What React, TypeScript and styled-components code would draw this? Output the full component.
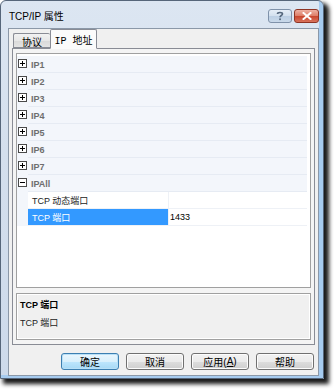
import React from 'react';
import styled, { createGlobalStyle, css } from 'styled-components';

const GlobalStyle = createGlobalStyle`
  html, body {
    margin: 0;
    padding: 0;
    background: #ffffff;
  }
  body {
    font-family: 'Liberation Sans', 'Noto Sans CJK SC', sans-serif;
    color: #000;
  }
`;

const UI_FONT = `'Liberation Sans', 'Noto Sans CJK SC', sans-serif`;

const Stage = styled.div`
  width: 335px;
  height: 390px;
  overflow: hidden;
`;

const Window = styled.div`
  box-sizing: border-box;
  width: 324px;
  height: 379px;
  display: flex;
  flex-direction: column;
  border: 1px solid #56667a;
  border-radius: 6px 6px 0 0;
  background: linear-gradient(180deg, #dce6f2 0%, #d4dfed 40%, #cddaeb 100%);
  box-shadow: inset -4px -3px 0 #a6cbef, 4px 4px 4px 1px rgba(0, 0, 0, 0.9);
  padding: 0 4px 2px 7px;
`;

const TitleBar = styled.div`
  height: 27px;
  display: flex;
  align-items: center;
  justify-content: space-between;
  padding-left: 1px;
`;

const Title = styled.span`
  font-family: ${UI_FONT};
  font-size: 10px;
  color: #000;
  margin-top: 2px;
`;

const CaptionButtons = styled.div`
  display: flex;
  gap: 2px;
  margin-top: 3px;
`;

const CaptionButton = styled.div<{ $kind: 'help' | 'close' }>`
  box-sizing: border-box;
  height: 14px;
  border-radius: 3px;
  display: flex;
  align-items: center;
  justify-content: center;
  ${(p) =>
    p.$kind === 'help'
      ? css`
          width: 24px;
          border: 1px solid #7f92aa;
          background: linear-gradient(180deg, #e6eef7 0%, #d3e0ee 50%, #bccfe4 51%, #c9d9ea 100%);
        `
      : css`
          width: 25px;
          border: 1px solid #8e3424;
          background: linear-gradient(180deg, #eeb1a3 0%, #dd7c66 50%, #c9452d 51%, #d8735c 100%);
        `}
`;

const Client = styled.div`
  box-sizing: border-box;
  flex: 1;
  display: flex;
  flex-direction: column;
  background: #f0f0f0;
  border: 1px solid #8b98a8;
  padding: 1px 3px 0 3px;
`;

const TabStrip = styled.div`
  height: 18px;
  display: flex;
  align-items: flex-end;
  padding-left: 1px;
  position: relative;
  z-index: 1;
`;

const Tab = styled.div<{ $active?: boolean }>`
  box-sizing: border-box;
  display: flex;
  align-items: center;
  justify-content: center;
  font-family: 'Liberation Mono', 'Noto Sans CJK SC', monospace;
  font-size: 10px;
  color: #000;
  border: 1px solid #898c95;
  border-radius: 2px 2px 0 0;
  ${(p) =>
    p.$active
      ? css`
          width: 47px;
          height: 20px;
          margin-bottom: -1px;
          background: #fbfbfb;
          border-bottom-color: #fbfbfb;
          padding-top: 1px;
        `
      : css`
          width: 37px;
          height: 15px;
          background: linear-gradient(180deg, #f2f2f2 0%, #e7e7e7 50%, #d9d9d9 51%, #e3e3e3 100%);
          border-right: none;
          padding-top: 2px;
        `}
`;

const TabPanel = styled.div`
  box-sizing: border-box;
  height: 297px;
  border: 1px solid #898c95;
  background: #f4f4f4;
  padding: 4px 3px 4px 3px;
  display: flex;
  flex-direction: column;
  gap: 5px;
`;

const Grid = styled.div`
  box-sizing: border-box;
  height: 236px;
  border: 1px solid #a0a0a0;
  box-shadow: inset 0 0 0 1px #ffffff;
  background: #ffffff;
  padding: 2px 3px 0 0;
  display: flex;
  flex-direction: column;
`;

const Row = styled.div`
  height: 17px;
  display: flex;
  font-family: ${UI_FONT};
  font-size: 9px;
`;

const Gutter = styled.div`
  width: 11px;
  flex: none;
  background: #f3f6fb;
  display: flex;
  align-items: flex-start;
  justify-content: center;
  padding-top: 3px;
  box-sizing: border-box;
`;

const CategoryLabel = styled.div`
  flex: 1;
  background: #f3f6fb;
  border-bottom: 1px solid #e6ebf3;
  display: flex;
  align-items: center;
  padding-left: 3px;
  font-weight: bold;
  color: #6e6e6e;
  padding-top: 2px;
`;

const Cell = styled.div<{ $selected?: boolean; $value?: boolean }>`
  box-sizing: border-box;
  display: flex;
  align-items: center;
  border-bottom: 1px solid #eef1f6;
  ${(p) =>
    p.$value
      ? css`
          flex: 1;
          padding-left: 1px;
          color: #000;
          background: #ffffff;
          border-left: 1px solid #eef1f6;
        `
      : css`
          width: 140px;
          padding-left: 4px;
          color: ${p.$selected ? '#ffffff' : '#222'};
          background: ${p.$selected ? '#3399ff' : '#ffffff'};
        `}
`;

const GridFill = styled.div`
  flex: 1;
  background: #ffffff;
`;

const Desc = styled.div`
  box-sizing: border-box;
  height: 47px;
  border: 1px solid #a0a0a0;
  box-shadow: inset 0 0 0 1px #ffffff;
  background: #f0f0f0;
  padding: 4px 3px;
  font-family: ${UI_FONT};
  font-size: 9px;
  display: flex;
  flex-direction: column;
  gap: 5px;
`;

const DescTitle = styled.div`
  font-weight: bold;
  color: #000;
`;

const DescText = styled.div`
  color: #222;
`;

const ButtonRow = styled.div`
  display: flex;
  justify-content: flex-end;
  gap: 7px;
  padding: 8px 1px 0 0;
`;

const Button = styled.div<{ $default?: boolean }>`
  box-sizing: border-box;
  width: 58px;
  height: 17px;
  display: flex;
  align-items: center;
  justify-content: center;
  border-radius: 3px;
  font-family: ${UI_FONT};
  font-size: 10px;
  color: #000;
  ${(p) =>
    p.$default
      ? css`
          border: 1px solid #3c7fb1;
          background: linear-gradient(180deg, #eaf6fd 0%, #d9f0fc 50%, #bee6fd 51%, #a7d9f5 100%);
          box-shadow: inset 0 0 0 1px #b9e0f7;
        `
      : css`
          border: 1px solid #707070;
          background: linear-gradient(180deg, #f2f2f2 0%, #ebebeb 50%, #dddddd 51%, #cfcfcf 100%);
          box-shadow: inset 0 0 0 1px #fcfcfc;
        `}
`;

const Mnemonic = styled.span`
  text-decoration: underline;
`;

const Expander: React.FC<{ open?: boolean }> = ({ open }) => (
  <svg width="9" height="9" viewBox="0 0 9 9">
    <rect x="0.5" y="0.5" width="8" height="8" fill="#ffffff" stroke="#4a4a4a" />
    <line x1="2" y1="4.5" x2="7" y2="4.5" stroke="#000" />
    {!open && <line x1="4.5" y1="2" x2="4.5" y2="7" stroke="#000" />}
  </svg>
);

const HelpGlyph = () => (
  <svg width="8" height="10" viewBox="0 0 8 10">
    <path d="M1.5 3 C1.5 1 6.5 1 6.5 3 C6.5 4.5 4 4.5 4 6.2" fill="none" stroke="#55677d" strokeWidth="1.6" />
    <rect x="3.2" y="7.4" width="1.7" height="1.7" fill="#55677d" />
  </svg>
);

const CloseGlyph = () => (
  <svg width="10" height="8" viewBox="0 0 10 8">
    <path d="M1.5 1 L8.5 7 M8.5 1 L1.5 7" stroke="#ffffff" strokeWidth="2" strokeLinecap="square" />
  </svg>
);

const categories = ['IP1', 'IP2', 'IP3', 'IP4', 'IP5', 'IP6', 'IP7'];

export default function App() {
  return (
    <Stage>
      <GlobalStyle />
      <Window>
        <TitleBar>
          <Title>TCP/IP 属性</Title>
          <CaptionButtons>
            <CaptionButton $kind='help'>
              <HelpGlyph />
            </CaptionButton>
            <CaptionButton $kind='close'>
              <CloseGlyph />
            </CaptionButton>
          </CaptionButtons>
        </TitleBar>
        <Client>
          <TabStrip>
            <Tab>协议</Tab>
            <Tab $active>IP 地址</Tab>
          </TabStrip>
          <TabPanel>
            <Grid>
              {categories.map((name) => (
                <Row key={name}>
                  <Gutter>
                    <Expander />
                  </Gutter>
                  <CategoryLabel>{name}</CategoryLabel>
                </Row>
              ))}
              <Row>
                <Gutter>
                  <Expander open />
                </Gutter>
                <CategoryLabel>IPAll</CategoryLabel>
              </Row>
              <Row>
                <Gutter />
                <Cell>TCP 动态端口</Cell>
                <Cell $value />
              </Row>
              <Row>
                <Gutter />
                <Cell $selected>TCP 端口</Cell>
                <Cell $value>1433</Cell>
              </Row>
              <GridFill />
            </Grid>
            <Desc>
              <DescTitle>TCP 端口</DescTitle>
              <DescText>TCP 端口</DescText>
            </Desc>
          </TabPanel>
          <ButtonRow>
            <Button $default>确定</Button>
            <Button>取消</Button>
            <Button>
              应用(<Mnemonic>A</Mnemonic>)
            </Button>
            <Button>帮助</Button>
          </ButtonRow>
        </Client>
      </Window>
    </Stage>
  );
}
